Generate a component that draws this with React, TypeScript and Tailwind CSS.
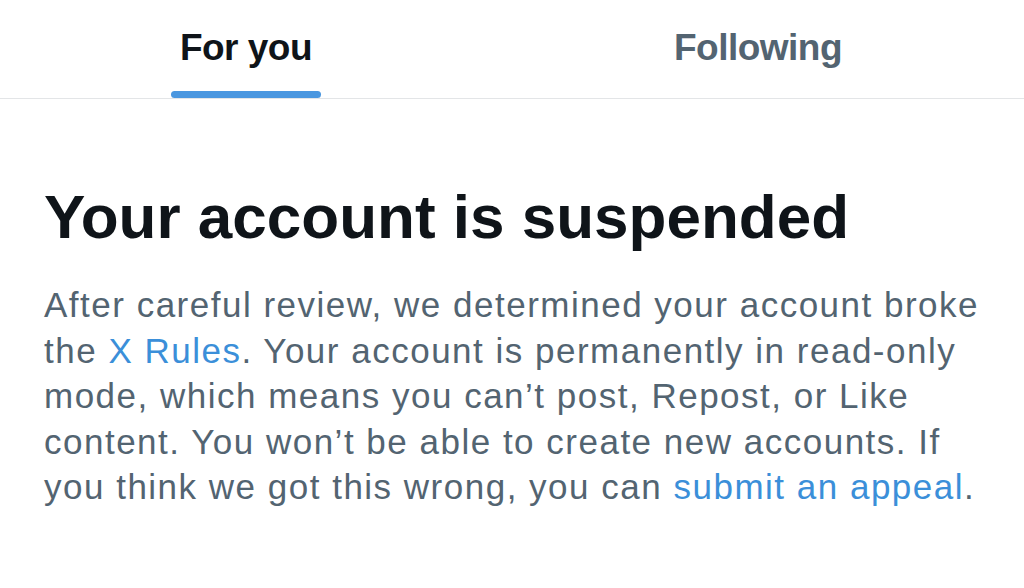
import React from 'react';

const tabs = [
  { label: 'For you', active: true },
  { label: 'Following', active: false },
];

export default function App() {
  return (
    <div
      className="h-[588px] w-[1024px] overflow-hidden bg-white"
      style={{ fontFamily: '"Liberation Sans", Arial, sans-serif' }}
    >
      <nav className="flex h-[99px] border-b border-[#e3e5e7]">
        {tabs.map((tab) => (
          <div key={tab.label} className="flex flex-1 justify-center pr-[20px]">
            <div className="relative flex flex-col items-center">
              <span
                className={
                  tab.active
                    ? 'pt-[26px] text-[37px] font-bold leading-[44px] tracking-[-0.5px] text-[#0f1419]'
                    : 'pt-[26px] text-[37px] font-bold leading-[44px] tracking-[-0.5px] text-[#536471]'
                }
              >
                {tab.label}
              </span>
              {tab.active && (
                <div className="absolute bottom-0 h-[7px] w-[150px] rounded-full bg-[#4a97e0]" />
              )}
            </div>
          </div>
        ))}
      </nav>

      <main className="px-[44px] pt-[82px]">
        <h1 className="text-[62px] font-black leading-[72px] text-[#0f1419]">
          Your account is suspended
        </h1>
        <p className="mt-[29px] text-[35px] leading-[45.5px] tracking-[1.5px] text-[#536471]">
          After careful review, we determined your account broke
          <br />
          the <span className="text-[#3b8fd9]">X Rules</span>. Your account is permanently in read-only
          <br />
          mode, which means you can’t post, Repost, or Like
          <br />
          content. You won’t be able to create new accounts. If
          <br />
          you think we got this wrong, you can{' '}
          <span className="text-[#3b8fd9]">submit an appeal</span>.
        </p>
      </main>
    </div>
  );
}
